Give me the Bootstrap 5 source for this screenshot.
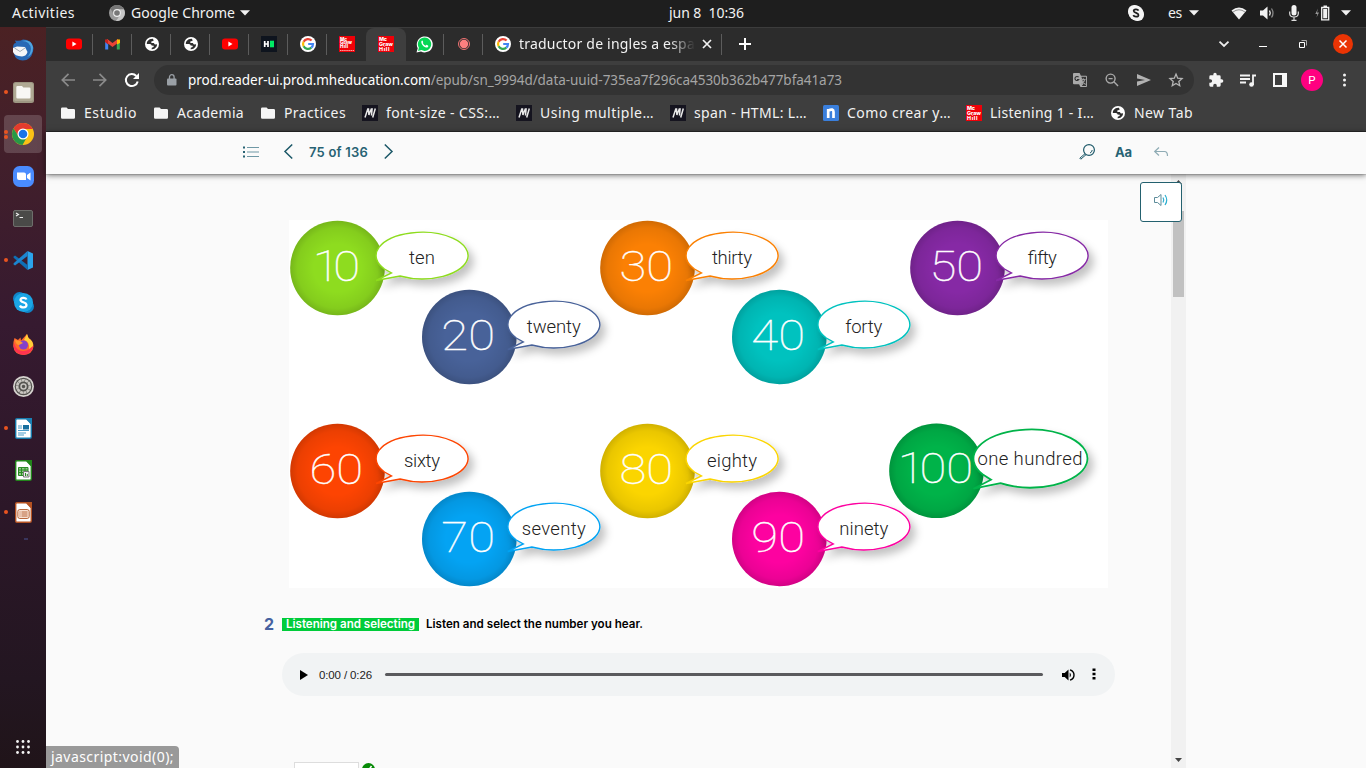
<!DOCTYPE html>
<html lang="es">
<head>
<meta charset="utf-8">
<title>Reader</title>
<link href="https://cdn.jsdelivr.net/npm/bootstrap@5.3.0/dist/css/bootstrap.min.css" rel="stylesheet">
<style>
body{width:1366px;height:768px;overflow:hidden;background:#fafafa;font-family:"Noto Sans",sans-serif;font-size:14px;line-height:20px;color:#f2f2f2}
svg{display:block;flex:none;overflow:visible}
[data-fit]{display:inline-block;white-space:pre;flex:none}
.topbar{height:27px;background:#1e1e1e;padding-bottom:1px}
.clock-slot{width:669px}
.dock{width:46px;background:linear-gradient(#4b2123 0,#44202a 14%,#361a30 40%,#2c1728 65%,#231621 88%,#201419);}
.dock-item{width:46px;height:42px}
.dock-item.current::before{content:"";position:absolute;left:4px;top:2px;width:38px;height:38px;border-radius:4px;background:#ffffff2b}
.dock-item svg{position:relative}
.dot{position:absolute;left:4px;top:19px;width:4px;height:4px;border-radius:50%;background:#e95420}
.dot.hi{top:16.5px}.dot.lo{top:21.5px}
.tabstrip{height:34px;background:#2c2c2c;border-top:1px solid #3c3c3c;padding-left:8px}
.tab-cell{width:39px;height:33px;padding-bottom:1px}
.tab-cell:not(.live):not(.nosep)::after{content:"";position:absolute;right:0;top:6px;width:1px;height:21px;background:#5c5c5c}
.tab-cell.live{width:40px;margin-right:-1px;background:#3e3e3e;border-radius:8px 8px 0 0}
.tab-cell.wide{width:239px;padding-left:12px}
.tab-title{width:176px;overflow:hidden;-webkit-mask-image:linear-gradient(90deg,#000 150px,transparent 176px);mask-image:linear-gradient(90deg,#000 150px,transparent 176px)}
.toolrow{height:38px;background:#3e3e3e}
.omni{margin-left:10px;width:1040px;height:30px;border-radius:15px;background:#333;padding-left:12px;color:#a5a5a5;font-size:13.5px}
.omni b{font-weight:400;color:#fff}
.tool-cell{width:32px}
.bookrow{height:33px;background:#3e3e3e;border-bottom:1px solid #1d1d1d;padding-left:15px;padding-bottom:5px}
.bm svg{margin-right:8px}
.bm .fold{margin-right:9px}
.reader-bar{height:42px;background:#fafafa;box-shadow:0 1px 6px #0009,0 0 1px #666;z-index:3;color:#276273;font-family:Inter,sans-serif;font-weight:600;font-size:13px;padding-bottom:3px}
.pagearea{width:1125px;height:594px;padding-left:218px}
.figure-box{margin:46px 0 0 25px;width:819px;height:368px;background:#fff}
.figure-box text{text-anchor:middle}
.num{font:100 43px Roboto,sans-serif;fill:#fff;stroke:#fff;stroke-width:.35}
.word{font:300 18.5px Roboto,sans-serif;fill:#222}
.question{margin-top:29px;height:15px;line-height:13px;font:600 11.6px/13px Inter,sans-serif;color:#000}
.qnum{width:18px;font:700 16px/15px Inter,sans-serif;color:#4661a0}
.tagline{background:#00cc3a;color:#fff;height:13px;padding:0 4px;margin-right:7px;width:137px}
.player{margin:21px 0 0 18px;width:833px;height:43px;border-radius:22px;background:#f1f3f4;color:#222;font:11.5px "Liberation Sans",sans-serif}
.rail{width:658px;height:3px;border-radius:2px;background:#5a5a5d}
.answer{margin:66px 0 0 30px;width:65px;height:30px;border:1px solid #ddd;background:#fff}
.scroller{width:15px;background:#f1f1f1;padding:37px 2px 0 2px}
.thumb{width:11px;height:86px;background:#c1c1c1}
.speak{right:184px;top:182px;width:42px;height:40px;background:#fff;border:1.5px solid #24616f;border-radius:3px;z-index:2;padding-bottom:5px}
.statusbub{left:46px;bottom:0;width:133px;height:22px;background:#999;border-radius:0 4px 0 0;padding:1px 0 0 5px;z-index:5;color:#fff}
.arrow-up{top:180px;left:1175px}
.arrow-down{top:758px;left:1175px}
</style>
</head>
<body class="d-flex flex-column">
<svg width="0" height="0" class="position-absolute"><defs>
<symbol id="yt" viewBox="0 0 16 16"><rect y="2.5" width="16" height="11" rx="3" fill="#f00"/><path d="M6.4 5.6v4.8L10.5 8z" fill="#fff"/></symbol>
<symbol id="globe" viewBox="0 0 16 16"><circle cx="8" cy="8" r="7" fill="#fff"/><path d="M8.800 2.700Q5.500 2.500 3.600 5q-.9 1.300-.8 2.900l3.200.1q1.500.3 1.600 1.500l2.200.2-.2 1.400-1.800.6-.2 1.500q3 .2 4.700-2.300.7-1.200.8-2.700l-2.200.3-1.100-1.500-2.500-.1.200-1.600 2-.3-.1-1.300z" fill="#2e2e2e"/></symbol>
<symbol id="goog" viewBox="0 0 16 16"><circle cx="8" cy="8" r="8" fill="#fff"/><g fill="none" stroke-width="2.2"><path d="M11.6 4.6A5 5 0 0 0 3.6 5.7" stroke="#ea4335"/><path d="M3.6 5.7a5 5 0 0 0 0 4.6" stroke="#fbbc05"/><path d="M3.6 10.3a5 5 0 0 0 7.7 1.4" stroke="#34a853"/><path d="M11.3 11.7A4.8 4.8 0 0 0 13 8H8.2" stroke="#4285f4"/></g></symbol>
<symbol id="mh" viewBox="0 0 16 16"><path d="M0 0h16v16H0z" fill="#f00008"/><g fill="#fff" font-family="Inter,sans-serif" font-weight="800" font-size="5.300"><text x="1" y="4.800" textLength="8">Mc</text><text x="1" y="9.600" textLength="14" lengthAdjust="spacingAndGlyphs">Graw</text><text x="1" y="14.600" textLength="10.500">Hill</text></g></symbol>
<symbol id="mdn" viewBox="0 0 16 16"><path d="M0 0h16v16H0z" fill="#15141f"/><path d="M3 12.500 5.800 4h.7l.4 6L9.300 4h.8l-.6 6.500M13.300 3.500l-2.600 9" fill="none" stroke="#e8e8e8" stroke-width="1.500"/></symbol>
<symbol id="folder" viewBox="0 0 14 14"><path d="M1.3 1.5h4.3L7 3h5.7Q14 3 14 4.3v7.2q0 1.3-1.3 1.3H1.3Q0 12.800 0 11.500V2.800Q0 1.500 1.300 1.500z" fill="#f5f5f5"/></symbol>
<symbol id="caret" viewBox="0 0 10 6"><path d="M0 .3h10L5 5.600z" fill="#f2f2f2"/></symbol>
<radialGradient id="rim"><stop offset=".5" stop-color="#000" stop-opacity="0"/><stop offset=".85" stop-color="#000" stop-opacity=".07"/><stop offset="1" stop-color="#000" stop-opacity=".17"/></radialGradient>
<filter id="drop" x="-20%" y="-20%" width="150%" height="170%"><feDropShadow dx="5" dy="6" stdDeviation="4.500" flood-color="#000" flood-opacity=".24"/></filter>
</defs></svg>

<header class="topbar d-flex align-items-center position-relative">
 <div class="clock-slot d-flex align-items-center">
  <span data-fit="63" style="margin-left:12px">Activities</span>
  <svg width="16" height="16" viewBox="0 0 16 16" style="margin-left:34px"><circle cx="8" cy="8" r="8" fill="#9a9a9a"/><path d="M8 4h7A8 8 0 0 0 1.500 3.500L4.500 9z" fill="#777"/><path d="M15 4.500a8 8 0 0 1-8 11.400L11.500 9.500 9 4.500z" fill="#c5c5c5"/><circle cx="8" cy="8" r="3.900" fill="#eee"/><circle cx="8" cy="8" r="2.800" fill="#777"/></svg>
  <span data-fit="104" style="margin-left:6px">Google Chrome</span>
  <svg width="10" height="6" style="margin-left:5px"><use href="#caret"/></svg>
 </div>
 <span data-fit="75">jun 8  10:36</span>
 <svg width="16" height="16" viewBox="0 0 16 16" style="margin-left:384px"><rect width="13" height="13" rx="6" fill="#f5f5f5"/><rect x="3" y="3" width="13" height="13" rx="6" fill="#f5f5f5"/><circle cx="8" cy="8" r="7.300" fill="#f5f5f5"/><path d="M10.500 5.600C9.800 3.700 5.600 3.900 5.700 6s4.800 1.700 4.800 3.900-4.300 2.500-5.200.2" fill="none" stroke="#1e1e1e" stroke-width="1.700"/></svg>
 <span data-fit="14" style="margin-left:24px">es</span>
 <svg width="10" height="6" style="margin-left:7px"><use href="#caret"/></svg>
 <svg width="16" height="13" viewBox="0 0 16 13" style="margin-left:32px"><path d="M.5 3.500Q8-2.500 15.500 3.500L8 12.500z" fill="#f2f2f2"/><path d="M2 5Q8 .5 14 5" fill="none" stroke="#666" stroke-width=".7"/></svg>
 <svg width="16" height="14" viewBox="0 0 16 14" style="margin-left:13px"><path d="M0 4.500h3L7.500.500v13L3 9.500H0z" fill="#f2f2f2"/><path d="M9.500 4.500q1.500 2.500 0 5" stroke="#eee" fill="none" stroke-width="1.400"/><path d="M11.500 2.500q3 4.500 0 9" stroke="#888" fill="none" stroke-width="1.300"/></svg>
 <svg width="10" height="16" viewBox="0 0 10 16" style="margin-left:13px"><rect x="2.500" width="5" height="10.500" rx="2.500" fill="#f2f2f2"/><path d="M.7 6.500v2Q.7 12 5 12t4.300-3.500v-2M5 12v3M2.500 15.300h5" fill="none" stroke="#ddd" stroke-width="1.200"/></svg>
 <svg width="15" height="16" viewBox="0 0 15 16" style="margin-left:16px"><path d="M3 3.500.3 9h2l-.8 3.500L4 7.500H2z" fill="#999"/><path d="M6.700 2.500h7v12.300h-7z" fill="none" stroke="#f2f2f2" stroke-width="1.300"/><path d="M8.200 4h4v9.300h-4zM8.500.500h3.500v2H8.500z" fill="#f2f2f2"/></svg>
 <svg width="10" height="6" style="margin-left:11px"><use href="#caret"/></svg>
</header>

<div class="d-flex flex-grow-1">
<aside class="dock d-flex flex-column" style="padding-top:2px">
 <div class="dock-item position-relative d-flex align-items-center justify-content-center"><svg width="22" height="22" viewBox="0 0 22 22"><path d="M3 1.500q5 1 8-1 9 0 10.500 8.500-.5 9-7 12Q4 23 2 15L1 9Q1 4 4 4z" fill="#2868b5"/><path d="M10 2q8 0 9 8-1 6-4 8 6-2 6-10-2-8-11-6z" fill="#4fa5df"/><path d="m1 9 4-1.500L13 8l2.500 5q-1 4-5.500 4.500Q2.500 17 1 13z" fill="#f5f6f8"/><path d="m2.500 9 5.500 3.500 5-3.500" fill="none" stroke="#8b98a5" stroke-width=".8"/></svg></div>
 <div class="dock-item position-relative d-flex align-items-center justify-content-center"><i class="dot"></i><svg width="21" height="21" viewBox="0 0 21 21"><rect width="21" height="21" rx="2.500" fill="#9d9682"/><rect x="1" y="1" width="19" height="18" rx="2" fill="#b0a994"/><path d="M4.500 4H9l1.300 1.500h6q1.200 0 1.200 1.200v8.600q0 1.200-1.200 1.200H4.500q-1.200 0-1.200-1.200v-10Q3.300 4 4.500 4z" fill="#f8f7f4"/></svg></div>
 <div class="dock-item current position-relative d-flex align-items-center justify-content-center"><i class="dot hi"></i><i class="dot lo"></i><svg width="22" height="22" viewBox="0 0 22 22"><circle cx="11" cy="11" r="11" fill="#fbc116"/><path d="M11 6h9.800A11 11 0 0 0 1.500 5.500L7 14z" fill="#e33b2e"/><path d="M1.500 5.500A11 11 0 0 0 10.500 22l4.800-8.500L11 16l-4.300-2.500z" fill="#279847"/><circle cx="11" cy="11" r="5.500" fill="#fff"/><circle cx="11" cy="11" r="4.300" fill="#1a73e8"/></svg></div>
 <div class="dock-item position-relative d-flex align-items-center justify-content-center"><svg width="21" height="21" viewBox="0 0 21 21"><rect width="21" height="21" rx="6.500" fill="#4a8cff"/><path d="M4 6.500h7q2 0 2 2V14H6q-2 0-2-2zM14 9l3.500-2.500v8L14 12z" fill="#fff"/></svg></div>
 <div class="dock-item position-relative d-flex align-items-center justify-content-center"><svg width="20" height="17" viewBox="0 0 20 17"><rect x=".5" y=".5" width="19" height="16" rx="1.500" fill="#4a4a48" stroke="#6e6e6b"/><path d="m3 3 2.500 1.500L3 6M6.500 7.500H10" fill="none" stroke="#eee" stroke-width="1.100"/></svg></div>
 <div class="dock-item position-relative d-flex align-items-center justify-content-center"><i class="dot"></i><svg width="20" height="19" viewBox="0 0 20 19"><path d="M14.500 0 20 2.500v14L14.500 19z" fill="#2ba4ec"/><path d="m14.500 19-13-11.500L.2 6 2 4.500 14.500 14z" fill="#0f6fb5"/><path d="m14.500 0-13 11.500L.2 13 2 14.500 14.500 5z" fill="#1b85d0"/></svg></div>
 <div class="dock-item position-relative d-flex align-items-center justify-content-center"><svg width="21" height="21" viewBox="0 0 21 21"><circle cx="6.500" cy="6.500" r="6.500" fill="#1085c8"/><circle cx="14.500" cy="14.500" r="6.500" fill="#1085c8"/><circle cx="10.500" cy="10.500" r="9.500" fill="#1ba6e6"/><path d="M13.500 7.500C12.800 5 7.500 5.300 7.500 8s6 1.800 6 5-5.500 3.200-6.500.5" fill="none" stroke="#fff" stroke-width="2.200"/></svg></div>
 <div class="dock-item position-relative d-flex align-items-center justify-content-center"><svg width="21" height="21" viewBox="0 0 21 21"><path d="M1.500 4 5 6l2.500-2.500L8 6.500 14 0l1.500 4q5 3 5 8.500-1 8-10 8.500Q1 20.500.3 12 .3 7 1.500 4z" fill="#ff6a2b"/><path d="M1 9q3 9 10 8t9-7q1 9-9.500 11Q1 20 .5 12z" fill="#ff344f"/><path d="m14 0 1.500 4q5 3 4.500 8l-4 3q1-7-5-9z" fill="#ffce38"/><circle cx="10.500" cy="11" r="4.500" fill="#8540c8"/><path d="m2 6 5 1 3 2-4 2q-3 0-4-5z" fill="#ff9a2e"/></svg></div>
 <div class="dock-item position-relative d-flex align-items-center justify-content-center"><svg width="21" height="21" viewBox="0 0 21 21"><circle cx="10.500" cy="10.500" r="10.500" fill="#d6d3cf"/><circle cx="10.500" cy="10.500" r="8.800" fill="#54534f"/><circle cx="10.500" cy="10.500" r="6.300" fill="none" stroke="#c9c6c1" stroke-width="2.600" stroke-dasharray="3 .4"/><circle cx="10.500" cy="10.500" r="2.500" fill="none" stroke="#c6c3bf" stroke-width="1.500"/></svg></div>
 <div class="dock-item position-relative d-flex align-items-center justify-content-center"><i class="dot"></i><svg width="17" height="21" viewBox="0 0 17 21"><path d="M2 .7h9.500l4.800 5v13q0 1.600-1.600 1.600H2Q.7 20.300.7 19V2Q.7.700 2 .700z" fill="#fff" stroke="#1478aa" stroke-width="1.400"/><path d="M10.500 0H17v7z" fill="#1a81b5"/><path d="M3 8h4M3 10h4M3 12.500h11M3 15h8M3 17h6" stroke="#4b9bc8" stroke-width="1.200"/><path d="M8 7h6v4.500H8z" fill="#176f9e"/></svg></div>
 <div class="dock-item position-relative d-flex align-items-center justify-content-center"><svg width="17" height="21" viewBox="0 0 17 21"><path d="M2 .7h9.500l4.800 5v13q0 1.600-1.600 1.600H2Q.7 20.300.7 19V2Q.7.700 2 .700z" fill="#fff" stroke="#22851b" stroke-width="1.400"/><path d="M10.500 0H17v7z" fill="#22851b"/><path d="M3.500 7.500H13v8H3.500zM3.500 10H13M3.500 12.500H13M6.500 7.500v8M10 7.500v8" fill="#8fc987" stroke="#2b8a24"/><path d="M8.500 11.500H14V17H8.500z" fill="#eee" stroke="#777"/><path d="M10.500 16v-3M12.300 16v-2" stroke="#2b8a24"/></svg></div>
 <div class="dock-item position-relative d-flex align-items-center justify-content-center"><i class="dot"></i><svg width="17" height="21" viewBox="0 0 17 21"><path d="M2 .7h9.500l4.800 5v13q0 1.600-1.600 1.600H2Q.7 20.300.7 19V2Q.7.700 2 .700z" fill="#fff" stroke="#b55222" stroke-width="1.400"/><path d="M10.500 0H17v7z" fill="#b55222"/><rect x="2.800" y="7.500" width="11.400" height="9" rx="2" fill="#f7dfd0" stroke="#b8673d"/><path d="M6.500 10h6M6.500 12h6M6.500 14h6M4.500 10h1M4.500 12h1M4.500 14h1" stroke="#b8673d"/></svg></div>
 <svg width="4" height="2" style="margin:5px 0 0 24px"><path d="M0 0h4v2H0z" fill="#39355c"/></svg>
 <svg width="14" height="14" viewBox="0 0 14 14" class="mt-auto" style="margin:0 0 14px 16px"><g fill="#f4f4f4"><circle cx="1.500" cy="1.500" r="1.400"/><circle cx="7" cy="1.500" r="1.400"/><circle cx="12.500" cy="1.500" r="1.400"/><circle cx="1.500" cy="7" r="1.400"/><circle cx="7" cy="7" r="1.400"/><circle cx="12.500" cy="7" r="1.400"/><circle cx="1.500" cy="12.500" r="1.400"/><circle cx="7" cy="12.500" r="1.400"/><circle cx="12.500" cy="12.500" r="1.400"/></g></svg>
</aside>

<div class="d-flex flex-column" style="width:1320px">
 <nav class="tabstrip d-flex">
  <div class="tab-cell position-relative d-flex align-items-center justify-content-center"><svg width="16" height="16"><use href="#yt"/></svg></div>
  <div class="tab-cell position-relative d-flex align-items-center justify-content-center"><svg width="15" height="12" viewBox="0 0 15 12"><path d="M1.700 11.500V2" stroke="#4285f4" stroke-width="3"/><path d="M13.300 11.500V2" stroke="#34a853" stroke-width="3"/><path d="m1.300 2.300 6.200 4.700 6.200-4.700" fill="none" stroke="#ea4335" stroke-width="3.200"/><path d="M12 1.500h3V5l-3 1.500z" fill="#fbbc04"/><path d="M0 1.500h3v5L0 4z" fill="#c5221f"/></svg></div>
  <div class="tab-cell position-relative d-flex align-items-center justify-content-center"><svg width="16" height="16"><use href="#globe"/></svg></div>
  <div class="tab-cell position-relative d-flex align-items-center justify-content-center"><svg width="16" height="16"><use href="#globe"/></svg></div>
  <div class="tab-cell position-relative d-flex align-items-center justify-content-center"><svg width="16" height="16"><use href="#yt"/></svg></div>
  <div class="tab-cell position-relative d-flex align-items-center justify-content-center"><svg width="16" height="16" viewBox="0 0 16 16"><path d="M0 0h16v16H0z" fill="#0e141e"/><path d="M3.700 5v6M7 5v6M4 8h3" stroke="#fff" stroke-width="1.700"/><path d="M9 4.700h4v6.600H9z" fill="#00ea64"/></svg></div>
  <div class="tab-cell position-relative d-flex align-items-center justify-content-center"><svg width="16" height="16"><use href="#goog"/></svg></div>
  <div class="tab-cell nosep position-relative d-flex align-items-center justify-content-center"><svg width="16" height="16" viewBox="0 0 16 16"><path d="M0 0h16v16H0z" fill="#f00008"/><g fill="#fff" font-family="Inter,sans-serif" font-weight="800" font-size="4.600"><text x="1" y="4.500">Mc</text><text x="1" y="8.300" textLength="12">Graw</text><text x="1" y="12" textLength="8">Hill</text></g><path d="M1 14.500h14" stroke="#ffa0a0" stroke-dasharray="1.500 .6"/></svg></div>
  <div class="tab-cell live position-relative d-flex align-items-center justify-content-center"><svg width="16" height="16"><use href="#mh"/></svg></div>
  <div class="tab-cell position-relative d-flex align-items-center justify-content-center"><svg width="17" height="17" viewBox="0 0 17 17"><path d="m.5 16.500 1.200-4.300A8 8 0 1 1 5 15.500z" fill="#fff"/><path d="m2 15 .9-3.200a6.700 6.700 0 1 1 2.500 2.300z" fill="#06d755"/><path d="M5.500 5q.8-1 1.400.2.700 1.200-.1 1.800 1 2 2.800 2.700.8-1.200 1.500-.7 2.200 1 .6 2.200-1.500 1-4.200-1Q4.500 7 5.500 5z" fill="#fff"/></svg></div>
  <div class="tab-cell position-relative d-flex align-items-center justify-content-center"><svg width="12" height="12" viewBox="0 0 12 12"><circle cx="6" cy="6" r="5.500" fill="none" stroke="#f27373"/><circle cx="6" cy="6" r="4.200" fill="#ff7f7f"/></svg></div>
  <div class="tab-cell wide position-relative d-flex align-items-center"><svg width="16" height="16"><use href="#goog"/></svg><div class="tab-title ms-2"><span data-fit="176">traductor de ingles a espa</span></div><svg width="8" height="8" viewBox="0 0 8 8" style="margin-left:8px"><path d="m0 0 8 8M8 0 0 8" stroke="#f2f2f2" stroke-width="1.700"/></svg></div>
  <svg width="12" height="12" viewBox="0 0 12 12" class="align-self-center" style="margin:-1px 0 0 17px"><path d="M6 0v12M0 6h12" stroke="#fff" stroke-width="2"/></svg>
  <svg width="10" height="6" viewBox="0 0 10 6" class="align-self-center" style="margin:-1px 0 0 468px"><path d="m.5.700 4.500 4.300L9.500.700" fill="none" stroke="#eee" stroke-width="1.800"/></svg>
  <svg width="8" height="2" class="align-self-center" style="margin:4px 0 0 30px"><path d="M0 0h8v1H0z" fill="#fff"/></svg>
  <svg width="8" height="8" viewBox="0 0 8 8" class="align-self-center" style="margin:-1px 0 0 32px"><path d="M.5 2.500h5v5h-5z" fill="none" stroke="#fff"/><path d="M2.500.500h5v5" fill="none" stroke="#aaa"/></svg>
  <svg width="20" height="20" viewBox="0 0 20 20" class="align-self-center" style="margin:-1px 0 0 26px"><circle cx="10" cy="10" r="10" fill="#ea3404"/><path d="m6.500 6.500 7 7m0-7-7 7" stroke="#fff" stroke-width="1.500"/></svg>
 </nav>
 <div class="toolrow d-flex align-items-center">
  <svg width="14" height="14" viewBox="0 0 14 14" style="margin-left:15px"><path d="M14 7H1.500M7.500.800 1.300 7l6.200 6.200" fill="none" stroke="#8b8b8b" stroke-width="1.700"/></svg>
  <svg width="14" height="14" viewBox="0 0 14 14" style="margin-left:18px"><path d="M0 7h12.500M6.500.800 12.700 7l-6.200 6.200" fill="none" stroke="#8b8b8b" stroke-width="1.700"/></svg>
  <svg width="14" height="14" viewBox="0 0 14 14" style="margin-left:18px"><path d="M12.700 8.500A6 6 0 1 1 11.300 3" fill="none" stroke="#fff" stroke-width="2"/><path d="M14 0v6H8z" fill="#fff"/></svg>
  <div class="omni d-flex align-items-center" style="margin-left:15px"><svg width="10" height="12" viewBox="0 0 10 12" style="margin-left:1px"><path d="M1 4.500h7.500q1 0 1 1v5q0 1-1 1H1q-1 0-1-1v-5q0-1 1-1z" fill="#9aa0a6"/><path d="M2.500 5V3a2.300 2.300 0 0 1 4.600 0v2" fill="none" stroke="#9aa0a6" stroke-width="1.300"/></svg>
   <span data-fit="654" style="margin-left:11px"><b>prod.reader-ui.prod.mheducation.com</b>/epub/sn_9994d/data-uuid-735ea7f296ca4530b362b477bfa41a73</span>
   <div class="d-flex ms-auto" style="margin-right:2px">
    <div class="tool-cell d-flex justify-content-center"><svg width="14" height="14" viewBox="0 0 15 15"><path d="M1 0h6l1.500 3H14q1 0 1 1v10q0 1-1 1H8L6.500 12H1q-1 0-1-1V1q0-1 1-1z" fill="#aaa"/><path d="M9 4h5v10H9.300l2-2.500z" fill="#353535"/><path d="M6 4.500a2.200 2.200 0 1 0 .2 2.500H4.300" fill="none" stroke="#333" stroke-width="1.200"/><path d="M8.500 7h5M11 5.500V7m1.500 0q-1 4-4 5M10 8.500l3.500 4" fill="none" stroke="#999" stroke-width="1.100"/></svg></div>
    <div class="tool-cell d-flex justify-content-center"><svg width="14" height="14" viewBox="0 0 15 15"><circle cx="6" cy="6" r="4.800" fill="none" stroke="#aaa" stroke-width="1.500"/><path d="m9.500 9.500 4.500 4.500M3.800 6h4.400" stroke="#aaa" stroke-width="1.500"/></svg></div>
    <div class="tool-cell d-flex justify-content-center"><svg width="14" height="14" viewBox="0 0 14 14"><path d="m0 1 14 6-14 6V8.500L8 7 0 5.500z" fill="#b2b2b2"/></svg></div>
    <div class="tool-cell d-flex justify-content-center"><svg width="14" height="14" viewBox="0 0 15 15"><path d="m7.500 1.200 1.800 4.300 4.700.4-3.500 3.100 1 4.600-4-2.400-4 2.400 1-4.600L1 5.900l4.700-.4z" fill="none" stroke="#b5b5b5" stroke-width="1.400"/></svg></div>
   </div>
  </div>
  <div class="d-flex align-items-center" style="margin-left:6px">
   <div class="tool-cell d-flex justify-content-center"><svg width="16" height="16" viewBox="0 0 24 24"><path d="M20.500 11H19V7a2 2 0 0 0-2-2h-4V3.500a2.500 2.500 0 0 0-5 0V5H4a2 2 0 0 0-2 2v3.800h1.500a2.700 2.700 0 0 1 0 5.400H2V20a2 2 0 0 0 2 2h3.800v-1.500a2.700 2.700 0 0 1 5.400 0V22H17a2 2 0 0 0 2-2v-4h1.500a2.500 2.500 0 0 0 0-5z" fill="#f4f4f4"/></svg></div>
   <div class="tool-cell d-flex justify-content-center"><svg width="16" height="13" viewBox="0 0 16 13"><path d="M0 1.500h10M0 5h10M0 8.500h6M13 11V1.500h3" fill="none" stroke="#f4f4f4" stroke-width="1.800"/><circle cx="11.500" cy="10.500" r="2.300" fill="#f4f4f4"/></svg></div>
   <div class="tool-cell d-flex justify-content-center"><svg width="14" height="14" viewBox="0 0 14 14"><path d="M1 1h12v12H1z" fill="none" stroke="#f8f8f8" stroke-width="2"/><path d="M9 1h4v12H9z" fill="#f8f8f8"/></svg></div>
   <div class="tool-cell d-flex justify-content-center"><svg width="22" height="22"><circle cx="11" cy="11" r="11" fill="#ff0080"/><text x="11" y="15" text-anchor="middle" font-family="Roboto,sans-serif" font-size="11.500" fill="#fff">P</text></svg></div>
   <div class="tool-cell d-flex justify-content-center"><svg width="4" height="14" viewBox="0 0 4 14"><g fill="#f2f2f2"><circle cx="2.500" cy="2" r="1.500"/><circle cx="2.500" cy="7" r="1.500"/><circle cx="2.500" cy="12" r="1.500"/></g></svg></div>
  </div>
 </div>
 <div class="bookrow d-flex align-items-center">
  <div class="bm d-flex align-items-center" style="width:93px"><svg width="14" height="14" class="fold"><use href="#folder"/></svg><span data-fit="53">Estudio</span></div>
  <div class="bm d-flex align-items-center" style="width:107px"><svg width="14" height="14" class="fold"><use href="#folder"/></svg><span data-fit="67">Academia</span></div>
  <div class="bm d-flex align-items-center" style="width:101px"><svg width="14" height="14" class="fold"><use href="#folder"/></svg><span data-fit="62">Practices</span></div>
  <div class="bm d-flex align-items-center" style="width:154px"><svg width="16" height="16"><use href="#mdn"/></svg><span data-fit="114">font-size - CSS:…</span></div>
  <div class="bm d-flex align-items-center" style="width:154px"><svg width="16" height="16"><use href="#mdn"/></svg><span data-fit="114">Using multiple…</span></div>
  <div class="bm d-flex align-items-center" style="width:153px"><svg width="16" height="16"><use href="#mdn"/></svg><span data-fit="113">span - HTML: L…</span></div>
  <div class="bm d-flex align-items-center" style="width:143px"><svg width="16" height="16" viewBox="0 0 16 16"><rect width="16" height="16" rx="1.500" fill="#3a7fdc"/><path d="M5.200 13V4M5.500 5.500Q10.500 3 10.500 7v6" fill="none" stroke="#fff" stroke-width="2.700"/></svg><span data-fit="104">Como crear y…</span></div>
  <div class="bm d-flex align-items-center" style="width:144px"><svg width="16" height="16"><use href="#mh"/></svg><span data-fit="104">Listening 1 - I…</span></div>
  <div class="bm d-flex align-items-center"><svg width="16" height="16"><use href="#globe"/></svg><span data-fit="59">New Tab</span></div>
 </div>

 <div class="reader-bar position-relative d-flex align-items-center">
  <svg width="16" height="12" viewBox="0 0 16 12" style="margin-left:197px"><path d="M4 1.500h12M4 6h12M4 10.500h12" stroke="#6f98a5"/><path d="M0 .5h2v2H0zM0 5h2v2H0zM0 9.500h2v2H0z" fill="#276273"/></svg>
  <svg width="9" height="15" viewBox="0 0 9 15" style="margin-left:25px"><path d="M8.200.500 1 7.500l7.200 7" fill="none" stroke="#1c5868" stroke-width="1.500"/></svg>
  <span data-fit="59" style="margin-left:16px">75 of 136</span>
  <svg width="9" height="15" viewBox="0 0 9 15" style="margin-left:16px"><path d="m.8.500 7.200 7-7.200 7" fill="none" stroke="#1c5868" stroke-width="1.500"/></svg>
  <svg width="16" height="16" viewBox="0 0 16 16" style="margin-left:686px"><circle cx="10" cy="6" r="5.400" fill="none" stroke="#1c5868" stroke-width="1.200"/><path d="m6 9.700-5.200 4.500 1 1L7 10.700M11 9q2-.7 2.200-3" fill="none" stroke="#1c5868"/></svg>
  <span data-fit="17" style="margin-left:20px;font-weight:700">Aa</span>
  <svg width="14" height="10" viewBox="0 0 14 10" style="margin-left:22px"><path d="M5 .5.700 4.500 5 8.500M1 4.500h9.500q3 0 3 4.500" fill="none" stroke="#8eabb4" stroke-width="1.200"/></svg>
 </div>

 <main class="d-flex flex-grow-1">
  <section class="pagearea">
   <div class="figure-box">
   <svg width="819" height="368" viewBox="289 220 819 368" id="chart"></svg>
   </div>
   <div class="question d-flex align-items-center"><span class="qnum">2</span><span class="tagline"><span data-fit="129">Listening and selecting</span></span><span data-fit="217">Listen and select the number you hear.</span></div>
   <div class="player d-flex align-items-center">
    <svg width="8" height="10" viewBox="0 0 8 10" style="margin-left:18px"><path d="M0 0v10l8-5z" fill="#000"/></svg>
    <span data-fit="53" style="margin-left:11px">0:00 / 0:26</span>
    <div class="rail" style="margin-left:13px"></div>
    <svg width="13" height="12" viewBox="0 0 13 12" style="margin-left:19px"><path d="M0 4h2.700L6.500.500v11L2.700 8H0z" fill="#000"/><path d="M7.700 3.500q2.500 2.500 0 5" fill="#000"/><path d="M8 .800q4 1.200 4 5.200t-4 5.200" fill="none" stroke="#000" stroke-width="1.400"/></svg>
    <svg width="4" height="12" viewBox="0 0 4 12" style="margin:-1px 0 0 17px"><path d="M.5.500h3v2.600h-3zM.5 4.700h3v2.600h-3zM.5 8.900h3v2.600h-3z" fill="#000"/></svg>
   </div>
   <div class="d-flex"><div class="answer"></div><svg width="13" height="13" viewBox="0 0 13 13" style="margin:67px 0 0 3px"><circle cx="6.500" cy="6.500" r="6.500" fill="#078a07"/><path d="m3.500 6.500 2 2.500L9.500 3" fill="none" stroke="#fff" stroke-width="1.500"/></svg></div>
  </section>
  <div class="scroller"><div class="thumb"></div></div>
 </main>
</div>
</div>

<svg class="arrow-up position-absolute" width="7" height="4"><path d="M0 4h7L3.500 0z" fill="#444"/></svg>
<svg class="arrow-down position-absolute" width="7" height="4"><path d="M0 0h7L3.500 4z" fill="#444"/></svg>
<button class="speak position-absolute d-flex align-items-center justify-content-center" aria-label="Listen"><svg width="14" height="12" viewBox="0 0 14 12"><path d="M.5 3.500h3L7 .500v11L3.500 8.500h-3z" fill="none" stroke="#5d8c9a"/><path d="M9 3.500q1.500 2.500 0 5M11 1q3.500 5 0 10" fill="none" stroke="#2aaed0" stroke-width="1.200"/></svg></button>
<div class="statusbub position-absolute"><span data-fit="123">javascript:void(0);</span></div>

<script src="https://cdn.jsdelivr.net/npm/bootstrap@5.3.0/dist/js/bootstrap.bundle.min.js"></script>
<script>
// number, word, circle centre, colour, width of the word
const items=[
 [10,'ten',337.5,268,'#8edc1f',26],[30,'thirty',647.5,268,'#fb8004',40],[50,'fifty',957.5,268,'#8629a5',29],
 [20,'twenty',469.3,337,'#486299',54],[40,'forty',779.3,337,'#00c2bf',37],
 [60,'sixty',337.5,471,'#fd4402',36],[80,'eighty',647.5,471,'#fbd500',50],[100,'one hundred',936.5,470.7,'#00b349',105],
 [70,'seventy',469.3,539,'#04a3f3',64],[90,'ninety',779.3,539,'#fd02a0',49]];
document.getElementById('chart').innerHTML=items.map(([n,w,x,y,c,ww])=>{
 const big=n===100;
 const d=big?'M46 3.500 54.500 9 37 18 64 12.500A57 29 0 1 0 46 3.500z':'M47 1 54 5 38.500 12.500 62.500 8A46 23.300 0 1 0 47 1z';
 // the 1 is set tight against the zero that follows it
 const kern=big?' dx="0 -4.500"':n===10?' dx="0 -5.500"':'';
 return `<g transform="translate(${x} ${y})"><circle r="47.300" fill="${c}"/><circle r="47.300" fill="url(#rim)"/>
 <path d="${d}" fill="#fff" stroke="${c}" stroke-width="${big?1.8:1.4}" filter="url(#drop)"/>
 <text class="num" transform="scale(1.14 1)" x="-1" y="12.500"${kern}>${n}</text>
 <text class="word" x="${big?93.5:84.5}" y="${big?-6:-4.3}" textLength="${ww}">${w}</text></g>`}).join('');
// spread each label over its set width
document.querySelectorAll('[data-fit]').forEach(e=>{
 const w=+e.dataset.fit;
 e.style.letterSpacing=(w-e.getBoundingClientRect().width)/e.textContent.length+'px';
 e.style.width=w+'px';
});
</script>
</body>
</html>
